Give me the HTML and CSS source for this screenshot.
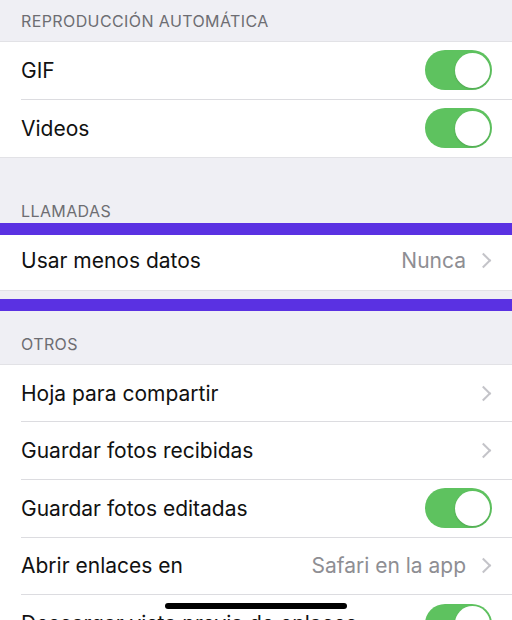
FILE: index.html
```html
<!DOCTYPE html>
<html lang="es">

<head>
  <meta charset="UTF-8">
  <meta name="viewport" content="width=device-width, initial-scale=1.0">
  <title>Ajustes - Datos</title>
  <link rel="stylesheet" href="styles.css">
</head>
<body>

  <div class="header header-first">Reproducción automática</div>
  <ul class="group">
    <li class="row">
      <span class="label">GIF</span>
      <span class="toggle"></span>
    </li>
    <li class="row">
      <span class="label">Videos</span>
      <span class="toggle"></span>
    </li>
  </ul>

  <div class="header">Llamadas</div>
  <div class="highlight">
    <ul class="group">
      <li class="row">
        <span class="label">Usar menos datos</span>
        <span class="value">Nunca</span>
        <span class="chevron"></span>
      </li>
    </ul>
  </div>

  <div class="header">Otros</div>
  <ul class="group">
    <li class="row">
      <span class="label">Hoja para compartir</span>
      <span class="chevron"></span>
    </li>
    <li class="row">
      <span class="label">Guardar fotos recibidas</span>
      <span class="chevron"></span>
    </li>
    <li class="row">
      <span class="label">Guardar fotos editadas</span>
      <span class="toggle"></span>
    </li>
    <li class="row">
      <span class="label">Abrir enlaces en</span>
      <span class="value">Safari en la app</span>
      <span class="chevron"></span>
    </li>
    <li class="row">
      <span class="label">Descargar vista previa de enlaces</span>
      <span class="toggle"></span>
    </li>
  </ul>

  <div class="home-indicator"></div>

</body>
</html>
```

FILE: styles.css
```css
* {
  box-sizing: border-box;
  margin: 0;
  padding: 0;
  font-family: Inter, "Noto Sans", sans-serif;
}

body {
  background-color: #efeff4;
  height: 620px;
  overflow: hidden;
  position: relative;
}

.header {
  height: 75px;
  padding: 0 21px 11px;
  display: flex;
  align-items: flex-end;
  color: #6d6d72;
  font-size: 16px;
  text-transform: uppercase;
  letter-spacing: 0.4px;
}

.header-first {
  height: 42px;
  padding-bottom: 11px;
}

.group {
  list-style: none;
  background-color: #fff;
  box-shadow: 0 -1px 0 #e2e2e6, 0 1px 0 #e2e2e6;
}

.row {
  height: 57.6px;
  margin-left: 21px;
  padding-right: 20px;
  display: flex;
  align-items: center;
  border-bottom: 1px solid #dcdce0;
  font-size: 21px;
  color: #111;
}

.row:last-child {
  border-bottom: none;
}

.label {
  flex: 1;
  white-space: nowrap;
}

.value {
  color: #8e8e93;
  margin-right: 12px;
}

.chevron {
  width: 11px;
  height: 11px;
  border-top: 2.5px solid #c4c4c9;
  border-right: 2.5px solid #c4c4c9;
  transform: rotate(45deg);
  margin-right: 3px;
}

.toggle {
  width: 67px;
  height: 40px;
  border-radius: 20px;
  background-color: #5ec25f;
  display: flex;
  justify-content: flex-end;
  align-items: center;
  padding: 2.5px;
}

.toggle::after {
  content: "";
  width: 35px;
  height: 35px;
  border-radius: 50%;
  background-color: #fff;
  box-shadow: 0 1px 2px rgba(0, 0, 0, 0.15);
}

/* marco morado sobre la fila de llamadas */
.highlight {
  position: relative;
}

.highlight::before,
.highlight::after {
  content: "";
  position: absolute;
  left: 0;
  right: 0;
  height: 12px;
  background-color: #5a31e2;
}

.highlight::before {
  top: -9px;
}

.highlight::after {
  bottom: -21px;
}

.home-indicator {
  position: absolute;
  top: 603px;
  left: 165px;
  width: 182px;
  height: 6px;
  border-radius: 3px;
  background-color: #000;
}
```
